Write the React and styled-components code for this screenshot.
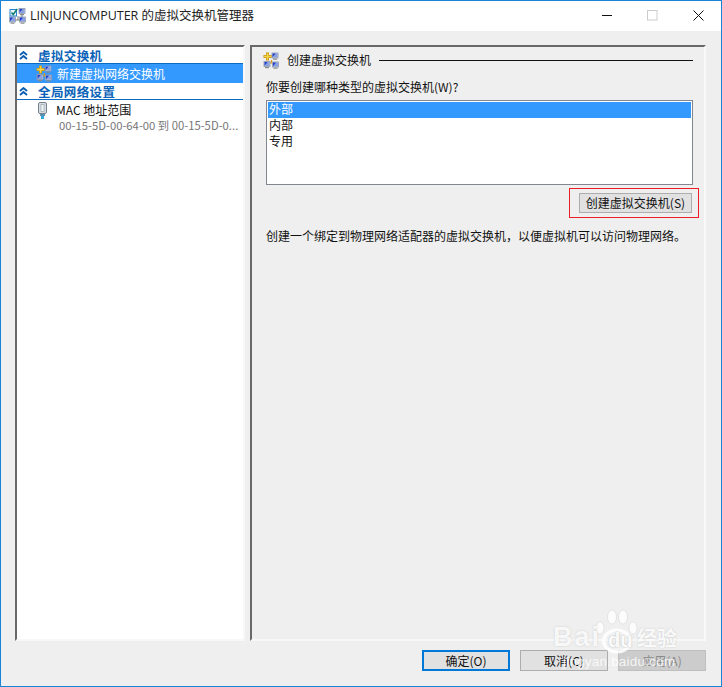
import React from "react";
import styled, { createGlobalStyle } from "styled-components";

const Global = createGlobalStyle`
  html, body { margin: 0; padding: 0; background: #efefef; }
  * { box-sizing: border-box; }
`;
const FONT = `"Noto Sans CJK SC", "Open Sans", sans-serif`;

const Win = styled.div`
  position: relative; width: 722px; height: 687px; display: flex; flex-direction: column;
  border: 1px solid #1883d7; background: #efefef; overflow: hidden;
  font: 12px/16px ${FONT}; color: #111;
`;
const TitleBar = styled.div`
  height: 30px; flex: none; background: #fff; display: flex; align-items: center; padding: 0 17px 0 8px;
`;
const TitleText = styled.div`
  margin-left: 4px; flex: 1; font-size: 12.5px; color: #222;
  font-family: "Open Sans", "Noto Sans CJK SC", sans-serif;
`;
const Controls = styled.div`display: flex; align-items: center; gap: 35px; margin-top: -1px;`;
const Ctl = styled.svg`width: 11px; height: 11px; display: block;`;

const Main = styled.div`
  flex: 1; min-height: 0; display: flex; gap: 5px; padding: 14px 15px 0 14px;
`;
const Panel = styled.div`
  height: 596px; min-width: 0; border-style: solid; border-width: 2px;
  border-color: #696969 #f8f8f8 #f8f8f8 #696969; display: flex; flex-direction: column;
`;
const LeftPanel = styled(Panel)`width: 230px; flex: none; background: #fff;`;
const RightPanel = styled(Panel)`flex: 1; padding: 4px 11px 0 14px; background: #efefef;`;

const Section = styled.div`
  height: 17px; display: flex; align-items: center; padding: 1px 0 0 2px; gap: 10px;
  border-bottom: 1px solid #0a6bc4; color: #0a63b8; font-weight: 700;
  font-size: 12.5px; letter-spacing: 0.4px;
`;
const Row = styled.div`
  height: 19px; display: flex; align-items: center; gap: 5px; padding-left: 19px;
  background: #3399ff; color: #fff;
`;
const MacRow = styled.div`display: flex; gap: 9px; padding: 2px 0 0 21px;`;
const MacText = styled.div`display: flex; flex-direction: column; min-width: 0;`;
const MacSub = styled.div`
  margin-left: 3px; color: #767676; font-size: 11.3px; line-height: 15px; white-space: nowrap;
`;

const PaneHead = styled.div`display: flex; align-items: center; gap: 8px; height: 18px; margin-left: -3px;`;
const HeadRule = styled.div`flex: 1; height: 1px; background: #111; margin-left: 0;`;
const PaneLabel = styled.div`margin-top: 10px; height: 16px;`;
const ListBox = styled.div`
  margin-top: 5px; height: 85px; border: 1px solid #82878f; background: #fff; padding: 1px;
`;
const ListItem = styled.div`
  height: 16px; line-height: 14px; padding-left: 1px;
  background: ${p => (p.$sel ? "#3399ff" : "transparent")};
  color: ${p => (p.$sel ? "#fff" : "#111")};
`;
const ActionRow = styled.div`display: flex; justify-content: flex-end; margin: 3px -6px 0 0;`;
const RedBox = styled.div`
  border: 1px solid #ee1c25; width: 130px; height: 30px; padding: 4px 6px 4px 9px; display: flex;
`;
const Btn = styled.div`
  width: ${p => p.$w || 88}px; height: ${p => p.$h || 21}px; display: flex; align-items: center; justify-content: center;
  background: ${p => (p.$disabled ? "#cccccc" : "#e1e1e1")};
  border: ${p => (p.$primary ? "2px solid #0078d7" : p.$disabled ? "1px solid #bfbfbf" : "1px solid #adadad")};
  color: ${p => (p.$disabled ? "#8a8a8a" : "#111")};
`;
const Desc = styled.div`margin-top: 10px; white-space: nowrap;`;

const Footer = styled.div`
  flex: none; height: 45px; padding: 9px 15px 0 0; display: flex; justify-content: flex-end; gap: 10px;
`;

const Watermark = styled.div`
  position: absolute; left: 552px; top: 606px; width: 140px; height: 66px; pointer-events: none;
`;
const WmBrand = styled.div`
  position: absolute; left: 0; top: 15px; font: 700 27px/30px "Liberation Sans", sans-serif; letter-spacing: 2px;
  color: rgba(255,255,255,.85); text-shadow: 0 0 2px rgba(185,185,185,.7);
`;
const WmDu = styled.div`
  position: absolute; left: 55px; top: 21px; font: 700 20px/24px "Liberation Sans", sans-serif;
  color: rgba(255,255,255,.95); text-shadow: 0 0 2px rgba(170,170,170,.9);
`;
const WmCn = styled.div`
  position: absolute; left: 84px; top: 19px; font: 700 20px/24px ${FONT}; color: rgba(255,255,255,.88);
  text-shadow: 0 0 2px rgba(185,185,185,.7); white-space: nowrap;
`;
const WmUrl = styled.div`
  position: absolute; left: 10px; top: 47px; font: 13.5px/16px "Liberation Sans", sans-serif; color: rgba(255,255,255,.82);
  letter-spacing: 0.2px; white-space: nowrap;
`;
const WmPaw = styled.svg`position: absolute; left: 40px; top: -2px; width: 50px; height: 50px;`;

const Chevrons = () => (
  <svg width="9" height="9" viewBox="0 0 9 9" style={{ flex: "none" }}>
    <path d="M1 4 4.5 1 8 4M1 8 4.5 5 8 8" fill="none" stroke="#0a5cb0" strokeWidth="1.8" />
  </svg>
);

const Mon = ({ x, y }) => (
  <g>
    <rect x={x + 0.5} y={y + 0.5} width="6" height="5" fill="#d3d9e0" stroke="#8d98a8" strokeWidth=".8" />
    <path d={`M${x + 1} ${y + 1}h3.5l-3.5 4z`} fill="#1f3fd0" />
    <path d={`M${x + 4.5} ${y + 1}h1.5v4h-5z`} fill="#8aa0e0" />
    <rect x={x + 1.5} y={y + 6} width="4" height="1.2" fill="#8a8a8a" />
  </g>
);

const SwitchIcon = () => (
  <svg width="16" height="17" viewBox="0 0 16 17" style={{ flex: "none" }}>
    <path d="M7 11h3M8.5 8v3" stroke="#d89a20" strokeWidth="1.2" fill="none" />
    <Mon x={8.5} y={0.5} />
    <Mon x={0.5} y={9} />
    <Mon x={9} y={9.5} />
    <path d="M4.5 .5v8M.5 4.5h8" stroke="#c89412" strokeWidth="3" />
    <path d="M4.5 1.2v6.6M1.2 4.5h6.6" stroke="#f6d64a" strokeWidth="1.4" />
  </svg>
);

const ManagerIcon = () => (
  <svg width="17" height="16" viewBox="0 0 17 16" style={{ flex: "none" }}>
    <path d="M6 12h5M9 8v4M13 7v3" stroke="#777" fill="none" />
    <Mon x={9.5} y={0} />
    <Mon x={0} y={8.5} />
    <Mon x={10} y={8.5} />
    <rect x="1" y="1.5" width="6.5" height="6.5" fill="#e8f3fb" stroke="#2a80cc" />
    <path d="M2.5 4.5 4.2 6.5 8.2 1" fill="none" stroke="#10806c" strokeWidth="1.5" />
  </svg>
);

const PlugIcon = () => (
  <svg width="9" height="17" viewBox="0 0 9 17" style={{ flex: "none" }}>
    <rect x=".5" y=".5" width="8" height="11" rx="1.5" fill="#d8dde2" stroke="#76838f" />
    <rect x="3" y="2.5" width="3" height="7" fill="#f3f5f7" stroke="#97a3ad" strokeWidth=".7" />
    <rect x="2" y="12" width="5" height="2" fill="#5c8fb0" />
    <rect x="3" y="14" width="3" height="3" fill="#30a8dc" />
  </svg>
);

export default function App() {
  return (
    <Win>
      <Global />
      <TitleBar>
        <ManagerIcon />
        <TitleText>LINJUNCOMPUTER 的虚拟交换机管理器</TitleText>
        <Controls>
          <Ctl viewBox="0 0 11 11"><path d="M1 5.5h10" stroke="#111" strokeWidth="1" /></Ctl>
          <Ctl viewBox="0 0 11 11"><rect x=".5" y=".5" width="9.5" height="9.5" fill="none" stroke="#ccc" /></Ctl>
          <Ctl viewBox="0 0 11 11"><path d="M.5.5l10 10M10.5.5l-10 10" stroke="#111" strokeWidth="1" /></Ctl>
        </Controls>
      </TitleBar>
      <Main>
        <LeftPanel>
          <Section><Chevrons />虚拟交换机</Section>
          <Row><SwitchIcon />新建虚拟网络交换机</Row>
          <Section><Chevrons />全局网络设置</Section>
          <MacRow>
            <PlugIcon />
            <MacText>
              <div>MAC 地址范围</div>
              <MacSub>00-15-5D-00-64-00 到 00-15-5D-0...</MacSub>
            </MacText>
          </MacRow>
        </LeftPanel>
        <RightPanel>
          <PaneHead><SwitchIcon />创建虚拟交换机<HeadRule /></PaneHead>
          <PaneLabel>你要创建哪种类型的虚拟交换机(W)?</PaneLabel>
          <ListBox>
            <ListItem $sel>外部</ListItem>
            <ListItem>内部</ListItem>
            <ListItem>专用</ListItem>
          </ListBox>
          <ActionRow>
            <RedBox><Btn $w={113} $h={20}>创建虚拟交换机(S)</Btn></RedBox>
          </ActionRow>
          <Desc>创建一个绑定到物理网络适配器的虚拟交换机，以便虚拟机可以访问物理网络。</Desc>
        </RightPanel>
      </Main>
      <Footer>
        <Btn $primary>确定(O)</Btn>
        <Btn>取消(C)</Btn>
        <Btn $disabled>应用(A)</Btn>
      </Footer>
      <Watermark>
        <WmPaw viewBox="0 0 50 50">
          <g fill="#fff" fillOpacity=".8" stroke="#c4c4c4" strokeOpacity=".6" strokeWidth=".6">
            <ellipse cx="7" cy="23" rx="4" ry="6" />
            <ellipse cx="19" cy="12" rx="4.5" ry="7" />
            <ellipse cx="30" cy="12" rx="4.5" ry="7" />
            <ellipse cx="40" cy="23" rx="4" ry="6" />
          </g>
          <ellipse cx="24" cy="36" rx="13.5" ry="11" fill="#fff" fillOpacity=".25" stroke="#fff" strokeOpacity=".85" strokeWidth="3" />
        </WmPaw>
        <WmBrand>Bai</WmBrand>
        <WmDu>du</WmDu>
        <WmCn>经验</WmCn>
        <WmUrl>jingyan.baidu.com</WmUrl>
      </Watermark>
    </Win>
  );
}
